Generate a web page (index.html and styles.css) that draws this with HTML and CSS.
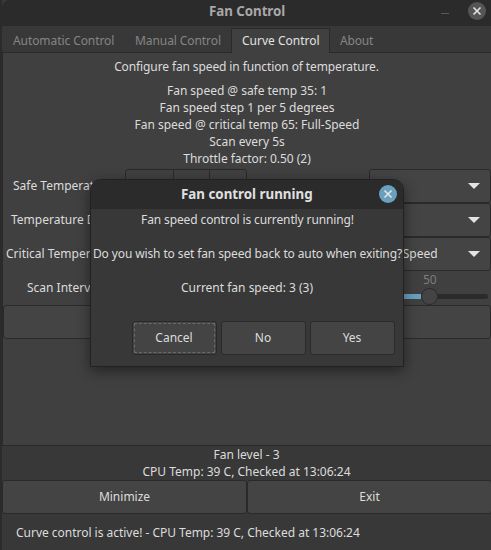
FILE: index.html
```html
<!DOCTYPE html>
<html lang="en">
<head>
<meta charset="utf-8">
<title>Fan Control</title>
<link rel="stylesheet" href="styles.css">
</head>
<body>
<div class="window">
  <header class="titlebar">
    <h1>Fan Control</h1>
    <span class="minimize"></span>
    <svg class="close" viewBox="0 0 18 18"><circle cx="9" cy="9" r="9"/><path d="M5.5 5.5l7 7M12.5 5.5l-7 7"/></svg>
  </header>
  <nav class="tabs">
    <span class="tab tab-auto">Automatic Control</span>
    <span class="tab tab-manual">Manual Control</span>
    <span class="tab tab-active">Curve Control</span>
    <span class="tab tab-about">About</span>
  </nav>
  <main class="page">
    <p class="intro tight">Configure fan speed in function of temperature.</p>
    <div class="summary">
      <p>Fan speed @ safe temp 35: 1</p>
      <p>Fan speed step 1 per 5 degrees</p>
      <p>Fan speed @ critical temp 65: Full-Speed</p>
      <p>Scan every 5s</p>
      <p>Throttle factor: 0.50 (2)</p>
    </div>
    <div class="settings">
      <label class="l-safe">Safe Temperature</label>
      <div class="spin"><i></i><i></i><i></i></div>
      <div class="combo"><span></span><svg viewBox="0 0 12 6"><path d="M0 0h12l-6 6z"/></svg></div>
      <label class="l-delta">Temperature Delta</label>
      <div class="spin"><i></i><i></i><i></i></div>
      <div class="combo"><span></span><svg viewBox="0 0 12 6"><path d="M0 0h12l-6 6z"/></svg></div>
      <label class="l-crit">Critical Temperature</label>
      <div class="spin"><i></i><i></i><i></i></div>
      <div class="combo"><span>Full-Speed</span><svg viewBox="0 0 12 6"><path d="M0 0h12l-6 6z"/></svg></div>
      <label class="l-scan">Scan Interval</label>
      <div></div>
      <div class="slider">
        <span class="value">50</span>
        <div class="track"><div class="fill"></div><div class="thumb"></div><div class="rest"></div></div>
      </div>
    </div>
    <div class="apply"></div>
  </main>
  <div class="status"><p>Fan level - 3</p><p>CPU Temp: 39 C, Checked at 13:06:24</p></div>
  <div class="actions"><button>Minimize</button><button>Exit</button></div>
  <footer>Curve control is active! - CPU Temp: 39 C, Checked at 13:06:24</footer>
</div>
<section class="dialog">
  <header>
    <h2>Fan control running</h2>
    <svg class="close blue" viewBox="0 0 18 18"><circle cx="9" cy="9" r="9"/><path d="M5.5 5.5l7 7M12.5 5.5l-7 7"/></svg>
  </header>
  <div class="message">
    <p class="tight">Fan speed control is currently running!</p>
    <p class="tight">Do you wish to set fan speed back to auto when exiting?</p>
    <p>Current fan speed: 3 (3)</p>
  </div>
  <div class="choices"><button class="focused">Cancel</button><button>No</button><button>Yes</button></div>
</section>
</body>
</html>
```
FILE: styles.css
```css
* { box-sizing: border-box; margin: 0; padding: 0; }
body {
  width: 491px; height: 550px; overflow: hidden; position: relative;
  background: #2b2b2b; color: #dcdcdc;
  font: 12px/17px "Noto Sans", sans-serif;
}
p, label, .tab, h1, h2, footer, button { white-space: nowrap; }
.tight { letter-spacing: -0.11px; }
.window { margin-left: 2px; width: 489px; height: 550px; background: #383838; display: flex; flex-direction: column; }
.titlebar { height: 26px; background: #2b2b2b; border-top-left-radius: 8px; display: flex; align-items: center; padding: 0 5px 4px 207px; flex: none; }
h1 { font-size: 13.33px; line-height: 18px; color: #a8a8a8; letter-spacing: -0.05px; }
h2 { font-size: 13.33px; line-height: 18px; color: #e0e0e0; }
.minimize { width: 8px; height: 1px; background: #595959; margin: 4px 19px 0 auto; }
.close { width: 18px; height: 18px; flex: none; }
.close circle { fill: #555; }
.close path { stroke: #e4e4e4; stroke-width: 1.6; fill: none; }
.close.blue circle { fill: #68a0be; }
.tabs { height: 27px; display: flex; border-bottom: 1px solid #2a2a2a; flex: none; }
.tab { color: #858585; line-height: 17px; padding-top: 6px; letter-spacing: -0.08px; }
.tab-auto { width: 122px; padding-left: 11px; }
.tab-manual { width: 107px; padding-left: 11px; }
.tab-active { width: 99px; height: 25px; margin-top: 2px; padding: 3px 0 0 10px; background: #404040; border: 1px solid #2a2a2a; border-bottom: 0; color: #e2e2e2; letter-spacing: 0; }
.tab-about { padding-left: 10px; letter-spacing: -0.15px; }
.page { height: 393px; background: #404040; border-left: 1px solid #2a2a2a; border-bottom: 1px solid #2a2a2a; padding-top: 5px; text-align: center; flex: none; }
.intro { margin-right: 1px; }
.summary { margin-top: 7px; padding-bottom: 2px; letter-spacing: -0.03px; }
.settings { display: grid; grid-template-columns: 122px 122px 122px 122px; grid-template-rows: 34px 34px 34px 34px; text-align: left; }
.settings > :nth-child(3n+1) { grid-column: 1; }
.settings > :nth-child(3n+2) { grid-column: 2; }
.settings > :nth-child(3n) { grid-column: 4; }
label { padding-top: 8px; overflow: hidden; }
.l-safe { padding-left: 10px; }
.l-delta { padding-left: 8px; }
.l-crit { padding-left: 3px; }
.l-scan { padding-left: 24px; }
.spin { display: flex; height: 34px; border: 1px solid #2a2a2a; border-radius: 3px; background: #404040; }
.spin i { width: 37px; border-left: 1px solid #2a2a2a; }
.spin i:first-child { width: 47px; border: 0; }
.combo { height: 34px; border: 1px solid #2a2a2a; border-radius: 3px; background: #444; display: flex; align-items: center; justify-content: space-between; padding: 0 10px 0 9px; }
.combo span { padding-bottom: 1px; }
.combo svg { width: 12px; height: 6px; fill: #e4e4e4; }
.slider { padding-right: 3px; }
.value { display: block; color: #7d7d7d; margin-left: 54px; }
.track { display: flex; align-items: center; height: 17px; }
.fill { width: 52px; height: 5px; background: #68a0be; }
.thumb { width: 17px; height: 17px; border: 1px solid #2a2a2a; border-radius: 50%; background: #444; }
.rest { flex: 1; height: 5px; background: #2b2b2b; border-radius: 0 3px 3px 0; }
.apply { height: 34px; border: 1px solid #2a2a2a; border-radius: 3px; background: #444; }
.status { height: 34px; text-align: center; flex: none; }
.actions { display: flex; height: 34px; flex: none; }
button { font: inherit; color: inherit; background: #444; border: 1px solid #2a2a2a; border-radius: 3px; }
.actions button { width: 245px; padding-bottom: 1px; flex: none; }
footer { padding: 10px 0 0 14px; letter-spacing: -0.02px; }
.dialog { position: absolute; left: 90px; top: 179px; width: 314px; height: 188px; border: 1px solid #222; border-radius: 11px 11px 0 0; background: #383838; box-shadow: 0 4px 14px rgba(0,0,0,.45); overflow: hidden; }
.dialog header { height: 29px; background: #2b2b2b; display: flex; align-items: center; justify-content: space-between; padding: 0 6px 1px 90px; }
.message { text-align: center; padding-top: 2px; display: flex; flex-direction: column; gap: 17px; align-items: center; }
.message .tight { margin-left: 1px; letter-spacing: -0.12px; }
.choices { display: flex; gap: 4px; justify-content: flex-end; padding: 25px 8px 0 0; }
.choices button { width: 85px; height: 34px; padding: 0 1px 1px 0; }
.choices .focused { outline: 1px dashed #6a6a6a; outline-offset: -3px; }
```
